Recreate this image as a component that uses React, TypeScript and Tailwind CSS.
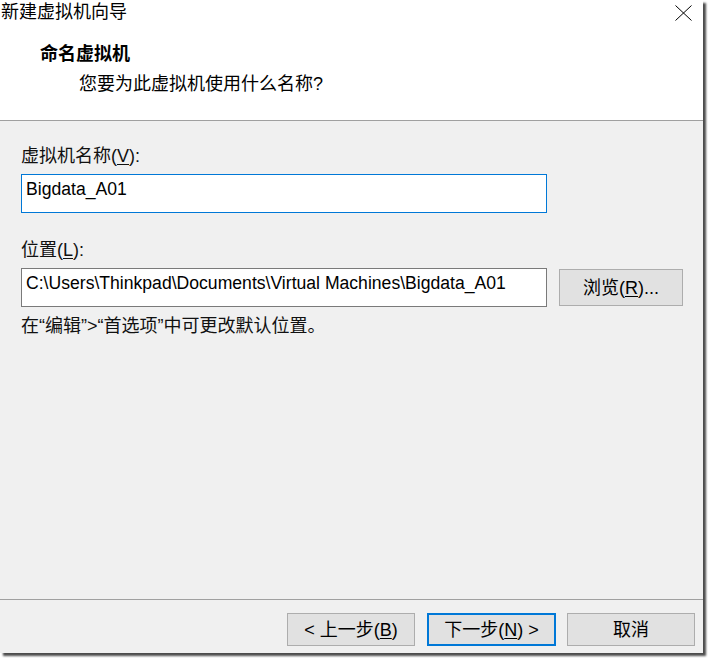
import React from "react";

const font = "font-['Liberation_Sans','Noto_Sans_CJK_SC',sans-serif]";

function Btn({ children, primary, w }: { children: React.ReactNode; primary?: boolean; w: string }) {
  return (
    <div
      className={`${w} h-[33px] flex items-center justify-center bg-[#e1e1e1] text-[18px] leading-[22px] text-black ${
        primary ? "border-2 border-[#0078d7]" : "border border-[#adadad]"
      }`}
    >
      {children}
    </div>
  );
}

export default function App() {
  return (
    <div className={`w-[708px] h-[658px] bg-white ${font}`}>
      <div className="w-[703px] h-[653px] bg-[#f0f0f0] flex flex-col shadow-[3px_3px_2px_rgba(0,0,0,0.7)]">
        {/* Header */}
        <div className="h-[121px] bg-white border-b border-[#a0a0a0] flex flex-col">
          <div className="flex justify-between h-[22px]">
            <div className="text-[18px] leading-[22px] text-black pl-[1px] pt-[1px]">新建虚拟机向导</div>
            <div className="pt-[5px] pr-[11px]">
              <svg width="17" height="16" viewBox="0 0 17 16">
                <path d="M0.5 0.5 L16.5 15.5 M16.5 0.5 L0.5 15.5" stroke="#000" strokeWidth="1" fill="none" />
              </svg>
            </div>
          </div>
          <div className="mt-[21px] ml-[40px] text-[18px] leading-[22px] font-bold text-black">命名虚拟机</div>
          <div className="mt-[8px] ml-[79px] text-[18px] leading-[22px] text-black">您要为此虚拟机使用什么名称?</div>
        </div>

        {/* Body */}
        <div className="flex-1 pl-[21px] pt-[24px] flex flex-col">
          <div className="text-[18px] leading-[22px] text-[#111]">
            虚拟机名称(<span className="underline underline-offset-2">V</span>):
          </div>
          <div className="mt-[7px] w-[526px] h-[39px] bg-white border border-[#0078d7] pl-[4px] pt-[3px] text-[17.6px] leading-[22px] text-black">
            Bigdata_A01
          </div>
          <div className="mt-[26px] text-[18px] leading-[22px] text-[#111]">
            位置(<span className="underline underline-offset-2">L</span>):
          </div>
          <div className="mt-[7px] flex items-center gap-[12px]">
            <div className="w-[526px] h-[39px] bg-white border border-[#7a7a7a] pl-[4px] pt-[3px] text-[17.6px] leading-[22px] text-black whitespace-nowrap">
              C:\Users\Thinkpad\Documents\Virtual Machines\Bigdata_A01
            </div>
            <div className="w-[124px] h-[37px] flex items-center justify-center bg-[#e1e1e1] border border-[#adadad] text-[18px] leading-[22px] text-black">
              浏览(<span className="underline underline-offset-2">R</span>)...
            </div>
          </div>
          <div className="mt-[8px] text-[18px] leading-[22px] text-[#111]">在“编辑”&gt;“首选项”中可更改默认位置。</div>
        </div>

        {/* Footer */}
        <div className="h-[54px] border-t border-[#a0a0a0] flex justify-end items-start pt-[13px] pr-[8px]">
          <Btn w="w-[128px]">
            &lt; 上一步(<span className="underline underline-offset-2">B</span>)
          </Btn>
          <div className="ml-[12px]">
            <Btn w="w-[129px]" primary>
              下一步(<span className="underline underline-offset-2">N</span>) &gt;
            </Btn>
          </div>
          <div className="ml-[11px]">
            <Btn w="w-[128px]">取消</Btn>
          </div>
        </div>
      </div>
    </div>
  );
}
